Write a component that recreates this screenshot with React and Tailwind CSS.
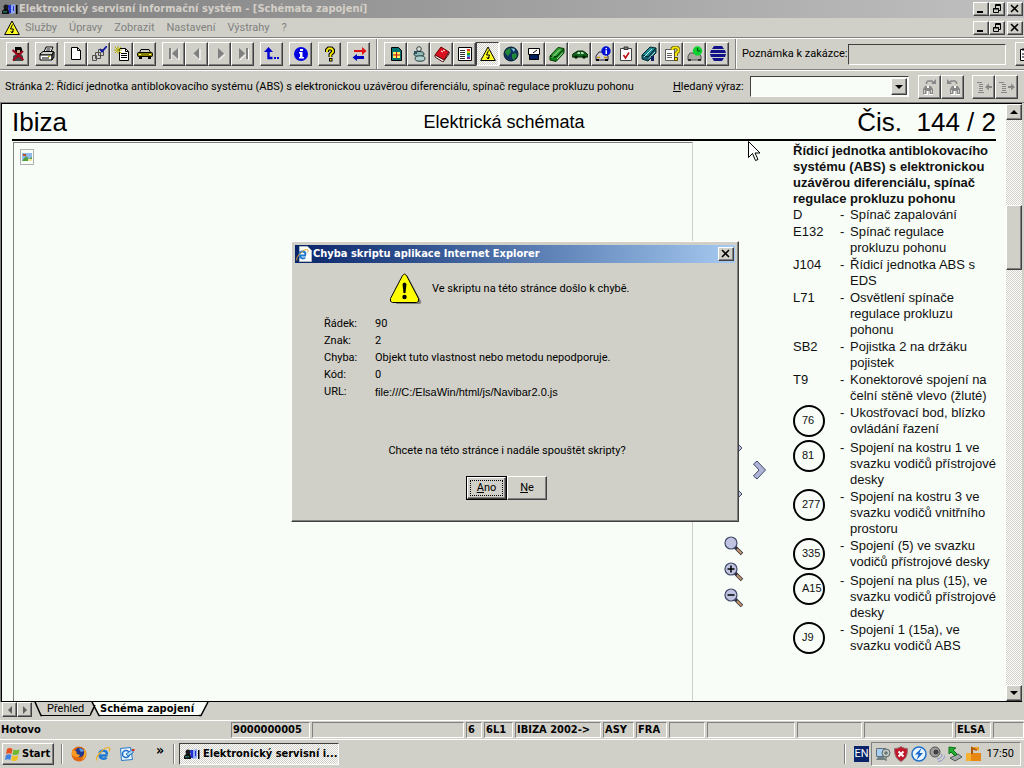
const UI_FONT = 'font-[Roboto,"Liberation_Sans",sans-serif]';
const UI_BOLD = 'font-bold font-["DejaVu_Sans_Condensed","DejaVu_Sans",sans-serif]';
const RAISED = 'bg-[#d0d0c8] border border-t-white border-l-white border-r-[#404040] border-b-[#404040] shadow-[inset_-1px_-1px_0_#808080]';
const SUNKEN = 'border border-t-[#808080] border-l-[#808080] border-r-white border-b-white';
const DITHER = 'bg-[conic-gradient(#ffffff_25%,#d0d0c8_0_50%,#ffffff_0_75%,#d0d0c8_0)] bg-[length:2px_2px]';

const Icon = ({ children, className = 'w-4 h-4', box = '0 0 16 16' }) => (
    <svg viewBox={box} className={`shrink-0 ${className}`} fill="none" aria-hidden="true">
        {children}
    </svg>
);

const icons = {
    exit: (
        <Icon>
            <path d="M5 1h6l1 2v3l-1 2H6L5 6z" fill="#000" />
            <path d="M7 4h3v3H7z" fill="#d0a880" />
            <path d="M3 10l3-2h5l2 2v5H3z" fill="#404848" />
            <path d="M2.500 4l11 10M13 5L3 14.500" stroke="#a00018" strokeWidth="2" />
        </Icon>
    ),
    print: (
        <Icon>
            <path d="M5 6l2-5h7l-2 5" fill="#fff" stroke="#000" />
            <path d="M7.500 3h4M7 5h4" stroke="#000" />
            <path d="M1 8l3-2.500h10.500L13 9H1z" fill="#d0d0c8" stroke="#000" />
            <path d="M1 9h12v5H1z" fill="#fff" stroke="#000" />
            <path d="M13 9l2-3v5l-2 3zM3 12h7" fill="#808080" stroke="#000" />
            <path d="M9 10.500h2" stroke="#c0c000" />
        </Icon>
    ),
    page: (
        <Icon>
            <path d="M3.500 1.500h6l3 3v9h-9z" fill="#fff" stroke="#000" />
            <path d="M9.500 1.500v3h3" stroke="#000" />
        </Icon>
    ),
    pages: (
        <Icon>
            <path d="M7.500 3.500h5v6h-5zM4.500 6.500h5v6h-5zM1.500 9.500h4v5h-4z" fill="#d0d0c8" stroke="#505050" />
            <path d="M9 3l2 2.500L16 0" stroke="#1018a0" strokeWidth="1.800" />
        </Icon>
    ),
    newPage: (
        <Icon>
            <path d="M5.500 2.500h6l3 3v9h-9z" fill="#fff" stroke="#000" />
            <path d="M11.500 2.500v3h3M7 7.500h6M7 9.500h6M7 11.500h6" stroke="#000" />
            <path d="M4 0v8M0 4h8M1 1l6 6M7 1L1 7" stroke="#b8b000" />
        </Icon>
    ),
    car: (
        <Icon>
            <path d="M4 3.500h8l2 4H2z" fill="#d0d0c8" stroke="#000" />
            <rect x=".5" y="6.500" width="15" height="4" rx="1" fill="#888000" stroke="#000" />
            <path d="M2 11h3v2H2zM11 11h3v2h-3z" fill="#000" />
            <path d="M2 8.500h2M12 8.500h2" stroke="#ffff60" />
        </Icon>
    ),
    first: (
        <Icon>
            <path d="M5 3v11M13 3v11l-6-5.500" stroke="#fff" />
            <path d="M3 2h2v11H3zM12 2v11L6 7.500z" fill="#808080" />
        </Icon>
    ),
    prev: (
        <Icon>
            <path d="M11 3v11l-6-5.500" stroke="#fff" />
            <path d="M10 2v11L4.500 7.500z" fill="#808080" />
        </Icon>
    ),
    next: (
        <Icon>
            <path d="M7 14l6-5.500" stroke="#fff" />
            <path d="M6 2v11l6-5.500z" fill="#808080" />
        </Icon>
    ),
    last: (
        <Icon>
            <path d="M5 14l6-5.500M13.500 3v11" stroke="#fff" />
            <path d="M4 2v11l6-5.500zM11 2h2v11h-2z" fill="#808080" />
        </Icon>
    ),
    back: (
        <Icon>
            <path d="M4.500 3v9h4" stroke="#0000d0" strokeWidth="2.400" />
            <path d="M0 6l4.500-5L9 6z" fill="#0000d0" />
            <path d="M10 11h2v2h-2zM13 11h2v2h-2z" fill="#0000d0" />
        </Icon>
    ),
    info: (
        <Icon>
            <circle cx="8" cy="8" r="7" fill="#0000e0" />
            <path d="M7 3h3v2H7zM6 6h3.500v5H11v1.500H6V11h1V7.500H6z" fill="#fff" />
        </Icon>
    ),
    help: (
        <Icon>
            <path d="M5 6V4l1.500-1.500h3L11 4v2L8.500 8.500V11" stroke="#000" strokeWidth="4" />
            <path d="M5 6V4l1.500-1.500h3L11 4v2L8.500 8.500V11" stroke="#f8f000" strokeWidth="1.800" />
            <path d="M7 12h3.500v3.500H7z" fill="#000" />
            <path d="M8 13h1.500v1.500H8z" fill="#f8f000" />
        </Icon>
    ),
    swap: (
        <Icon>
            <path d="M3 4h8V1l4.500 4L11 9V6H3z" fill="#e01010" />
            <path d="M13 10H6V8l-4.500 3.500L6 15v-2h7z" fill="#0000c0" />
        </Icon>
    ),
    sheet: (
        <Icon>
            <path d="M3.500 1.500h7l3 3v10h-10z" fill="#007070" stroke="#000" />
            <path d="M5 6h7v6H5z" fill="#fff060" />
            <path d="M5 9h7M8.500 6v6" stroke="#c01010" />
        </Icon>
    ),
    wheel: (
        <Icon>
            <circle cx="8" cy="3" r="2.300" fill="#e0e0e0" stroke="#304040" />
            <ellipse cx="8" cy="8" rx="5" ry="2.500" fill="#90b8b8" stroke="#203838" />
            <ellipse cx="9" cy="12.500" rx="5" ry="2.700" fill="#b0d0d0" stroke="#203838" />
            <path d="M3 5h3v3H3z" fill="#305060" />
        </Icon>
    ),
    redBook: (
        <Icon>
            <path d="M1 9l6-8 8 5-5 8z" fill="#d81020" stroke="#700" />
            <path d="M1 9v2l8 5 6-8V6l-5 8z" fill="#fff" stroke="#501010" />
            <path d="M7 5l2 1M9 4l2 1" stroke="#fff" />
        </Icon>
    ),
    list: (
        <Icon>
            <path d="M1.500 1.500h13v13h-13z" fill="#fff" stroke="#000" />
            <path d="M3 4.500h5M3 6.500h5M3 8.500h5M3 10.500h5M3 12.500h5" stroke="#303030" />
            <path d="M10 3h3v2h-3z" fill="#e03030" />
            <path d="M10 5h3v2h-3z" fill="#e0d000" />
            <path d="M10 7h3v2h-3z" fill="#20a020" />
            <path d="M10 9h3v2h-3z" fill="#20a0e0" />
            <path d="M10 11h3v2h-3z" fill="#8020a0" />
        </Icon>
    ),
    warning: (
        <Icon>
            <path d="M8 1l7.300 13.500H.7z" fill="#ffff20" stroke="#000" />
            <path d="M8.500 4.500L6.500 9h3L8 13M6.800 11.200L8 13l1.600-1.500" stroke="#000" />
        </Icon>
    ),
    globe: (
        <Icon>
            <circle cx="8" cy="8" r="7" fill="#103060" stroke="#001828" />
            <path d="M3 4l4-2 1 4-3 4-3-3zM9 8l4-1 1 3-3 4-2-2z" fill="#208838" />
            <path d="M8 2l4 1-1 3z" fill="#80c8d8" />
        </Icon>
    ),
    monitor: (
        <Icon>
            <path d="M2.500 2.500h11v6h-11z" fill="#fff" stroke="#000" />
            <path d="M7 7l4-3" stroke="#000" />
            <path d="M3.500 8.500h9v5h-9z" fill="#002060" stroke="#000" />
        </Icon>
    ),
    greenBook: (
        <Icon>
            <path d="M1 10l8-8.500 6 1L7 11z" fill="#30a030" stroke="#003800" />
            <path d="M1 10v4l6 1.500L15 7V3L7 11z" fill="#108018" stroke="#003800" />
            <path d="M3 11.500L11 3.500M8 13l6-6.500" stroke="#b0e8b0" />
        </Icon>
    ),
    greenCar: (
        <Icon>
            <path d="M0 10l1-2 3-2 2-1h5l3 2 2 2v2H0z" fill="#106820" stroke="#002800" />
            <path d="M5 8l1-2h2v2zM9 8V6h2l1 2z" fill="#b8d8b8" />
            <circle cx="4" cy="11" r="1.800" fill="#002000" />
            <circle cx="12" cy="11" r="1.800" fill="#002000" />
        </Icon>
    ),
    carInfo: (
        <Icon>
            <path d="M1 10l3-4h6l3 4v4H1z" fill="#d0d0d0" stroke="#202040" />
            <path d="M2 11.500h3M9 11.500h3" stroke="#d09000" strokeWidth="1.500" />
            <path d="M1 13h3v2H1zM10 13h3v2h-3z" fill="#000" />
            <circle cx="11" cy="5" r="4.700" fill="#0010d8" />
            <path d="M10.500 2h1.500v1.300h-1.500zM10.500 4.300H12V8h-1.500z" fill="#fff" />
        </Icon>
    ),
    checklist: (
        <Icon>
            <path d="M2.500 2.500h11v12h-11z" fill="#fff" stroke="#404040" />
            <path d="M6 1h4v2.500H6z" fill="#808080" stroke="#303030" />
            <path d="M5.500 9l2 3L11 6.500" stroke="#c01010" strokeWidth="1.600" />
        </Icon>
    ),
    tealBook: (
        <Icon>
            <path d="M1 9l8-8 6 1-8 9z" fill="#208890" stroke="#002830" />
            <path d="M1 9v4l6 2 8-8V2l-8 9z" fill="#186070" stroke="#002830" />
            <path d="M3 11l8-8M8 12.500L14 6" stroke="#b8e8f0" />
            <path d="M10 10h3v5h-3z" fill="#102060" />
        </Icon>
    ),
    docHelp: (
        <Icon>
            <path d="M1.500 3.500h9v11h-9z" fill="#fff" stroke="#606060" />
            <path d="M3 7.500h5M3 9.500h5M3 11.500h5" stroke="#606060" />
            <path d="M8.500 4V2.500L10 1.500h3L14.500 3v2L12 7.500V10" stroke="#504800" strokeWidth="3.400" />
            <path d="M8.500 4V2.500L10 1.500h3L14.500 3v2L12 7.500V10" stroke="#f8e800" strokeWidth="2" />
            <path d="M10.500 11.500h3v3h-3z" fill="#f8e800" stroke="#504800" />
        </Icon>
    ),
    carClock: (
        <Icon>
            <path d="M1 10l2-3h8l3 3v4H1z" fill="#a8a8a0" stroke="#505050" />
            <path d="M1 13h3v2H1zM11 13h3v2h-3z" fill="#303030" />
            <circle cx="10.500" cy="5" r="4.700" fill="#10d030" />
            <path d="M10.500 2v3h3" stroke="#005010" />
        </Icon>
    ),
    stripes: (
        <Icon>
            <path d="M4 0h8l2 3H2zM1 4h14l1 3H0zM0 8h16l-1 3H1zM2 12h12l-2 3H4z" fill="#101088" />
        </Icon>
    ),
    note: (
        <Icon>
            <path d="M1.500 3.500h12v11h-12zM4 2v3M10 2v3" fill="#fff" stroke="#000" />
            <path d="M3 8h2M7 8h2M3 11h2M7 11h2" stroke="#000" />
        </Icon>
    ),
    find: (
        <Icon>
            <path d="M2 16h4v-4h1v4h4v-5l-2-4H4l-2 4z" fill="#fff" />
            <path d="M1 15v-5l2-3h2v2h2V7h2l2 3v5H7.500v-3h-3v3z" fill="#888" />
            <path d="M2.500 11v3M9.500 11v3" stroke="#d0d0c8" />
            <path d="M4.500 5V3.500L6 2h4l1.500 2" stroke="#888" strokeWidth="1.500" />
            <path d="M9 5h5V0z" fill="#888" />
        </Icon>
    ),
    findBack: (
        <Icon>
            <path d="M6 16h4v-4h1v4h4v-5l-2-4H8l-2 4z" fill="#fff" />
            <path d="M5 15v-5l2-3h2v2h2V7h2l2 3v5h-3.500v-3h-3v3z" fill="#888" />
            <path d="M6.500 11v3M13.500 11v3" stroke="#d0d0c8" />
            <path d="M11.500 5V3.500L10 2H6L4.500 4" stroke="#888" strokeWidth="1.500" />
            <path d="M7 5H2V0z" fill="#888" />
        </Icon>
    ),
    outdent: (
        <Icon>
            <path d="M1 3.500h5M3 5.500h4M3 7.500h4M3 9.500h4M3 11.500h4M2 13.500h6" stroke="#888" />
            <path d="M9 8l4-3.500V7h3v2h-3v2.500z" fill="#888" />
        </Icon>
    ),
    indent: (
        <Icon>
            <path d="M0 3.500h5M3 5.500h4M3 7.500h4M3 9.500h4M3 11.500h4M2 13.500h6" stroke="#888" />
            <path d="M16 8l-4-3.500V7H9v2h3v2.500z" fill="#888" />
        </Icon>
    ),
    app: (
        <Icon>
            <circle cx="4" cy="6" r="2.500" fill="#181818" />
            <path d="M0 10l2-2h4l1 2v3H0z" fill="#101010" />
            <path d="M1 10h4v1.500H1z" fill="#207060" />
            <path d="M6 4h4v8H7z" fill="#2030d0" />
            <path d="M9 4l4-1v9l-4 1z" fill="#90a8f0" />
            <path d="M11 5h1v5h-1z" fill="#2030d0" />
            <path d="M14 4h1.500v9H14z" fill="#000" />
        </Icon>
    ),
    ie: (
        <Icon>
            <path d="M12.500 9.500H4.500C5 13 10 13.500 11.500 11.500M4.500 7.500C5 3.500 12 3.500 12 8.300" stroke="#2078d0" strokeWidth="2.400" />
            <path d="M2 14.500C-1 12 8 2 13 1.500c3 0 1.500 3 1 4" stroke="#f0b020" strokeWidth="1.200" />
        </Icon>
    ),
    iePage: (
        <Icon>
            <path d="M3.500.5h8l4 4v11h-12z" fill="#fff" stroke="#b0b8c0" />
            <path d="M10 9.500H3.500c.5 3.500 4.500 3.500 5.500 2M3.500 8C4 4.500 9.500 4.500 9.500 8.500" stroke="#2078d0" strokeWidth="2" />
            <path d="M1 14.500C-1 12 6 4 10.500 3.500c2.500 0 1.500 2 1 3" stroke="#e0a020" />
        </Icon>
    ),
    firefox: (
        <Icon>
            <circle cx="8" cy="8" r="7.500" fill="#e06810" />
            <circle cx="8.500" cy="6.500" r="4.700" fill="#203890" />
            <path d="M8 3c2-1 4 0 5 2l-3 1z" fill="#60a0e0" />
            <path d="M1 3c1 2 2 1 4 2 1 1 0 2 1 3l3 1c-1 3-5 3-8 0z" fill="#f89820" />
            <path d="M13 3c3 3 2 9-2 11 2-3 3-7 2-11z" fill="#f8c030" />
        </Icon>
    ),
    outlook: (
        <Icon>
            <path d="M1.500 2.500l10-1 2 12-11 1z" fill="#e8f4ff" stroke="#2878c8" />
            <circle cx="7" cy="8" r="3.500" stroke="#2070c8" strokeWidth="1.600" />
            <path d="M7 8l7-5v4l-5 3z" fill="#a8d0f0" stroke="#2878c8" />
            <path d="M13 3h2.500v2H13z" fill="#d03020" />
        </Icon>
    ),
    windows: (
        <Icon>
            <path d="M2 3c2-1.500 4-1 5.500 0L6.500 8C5 7 3 6.800 1 8z" fill="#e85020" />
            <path d="M8.500 3.400c2 1 4 1 6-.2l-1 5c-2 1-4 1-6 .2z" fill="#70b830" />
            <path d="M1 9c2-1.200 4-1 5.300 0l-1 5C4 13 2 12.800 0 14z" fill="#4080e0" />
            <path d="M7.300 9.400c2 1 4 1 6-.2l-1 5c-2 1-4 1-6 .2z" fill="#f0c020" />
        </Icon>
    ),
};

const TRAY = [
    ['Síť', (
        <Icon>
            <path d="M1.500 2.500h9v8h-9z" fill="#a8d0f0" stroke="#607080" />
            <path d="M3 11h6l2 3H1z" fill="#708080" />
            <circle cx="11" cy="7" r="4" fill="#c0c8c8" stroke="#606868" />
            <path d="M9 7h4M11 5v4M11 11v4" stroke="#506060" />
        </Icon>
    )],
    ['Zabezpečení', (
        <Icon>
            <path d="M8 .5c2 1.500 4 2 6.500 2 0 6-1 10-6.500 13-5.500-3-6.500-7-6.500-13 2.500 0 4.500-.5 6.500-2z" fill="#c01828" stroke="#907078" />
            <path d="M5.500 5.500l5 5M10.500 5.500l-5 5" stroke="#fff" strokeWidth="2" />
        </Icon>
    )],
    ['Napájení', (
        <Icon>
            <circle cx="8" cy="8" r="7" fill="#e8f4ff" stroke="#2070c8" strokeWidth="1.500" />
            <path d="M10.500 2L4 8.500h3.500L5.500 14 12 7H8.500z" fill="#1868d0" />
        </Icon>
    )],
    ['Hlasitost', (
        <Icon>
            <circle cx="6" cy="6" r="5" fill="#a0a0a0" stroke="#505050" />
            <circle cx="7" cy="6" r="2.500" fill="#404040" />
            <path d="M8 13c3 0 5-2 5-5M9 15.500c4 0 6.500-3 6.500-6" stroke="#8890d0" />
        </Icon>
    )],
    ['Hardware', (
        <Icon>
            <path d="M3 12l8-4 4 3-7 4z" fill="#a0a8a8" stroke="#505858" />
            <path d="M2 1v7l2-2 4 4 2-2-4-4 3-2z" fill="#20b030" stroke="#107018" />
        </Icon>
    )],
    ['Balíček', (
        <Icon>
            <path d="M1 7h15v8H1z" fill="#e88810" />
            <path d="M1 7h5v8H1z" fill="#f8b030" />
            <path d="M7 8V2l5 2" stroke="#b05800" strokeWidth="2" />
            <path d="M8 1h6v4z" fill="#f0a020" />
        </Icon>
    )],
];

const FILE_TOOLS = [
    [['exit', 'Konec']],
    [['print', 'Tisk']],
    [['page', 'Nový'], ['pages', 'Seznam'], ['newPage', 'Nová zakázka'], ['car', 'Vozidlo']],
    [['first', 'První'], ['prev', 'Předchozí'], ['next', 'Další'], ['last', 'Poslední']],
    [['back', 'Zpět']],
    [['info', 'Informace']],
    [['help', 'Nápověda']],
    [['swap', 'Přepnout']],
];

const MODULE_TOOLS = [
    ['sheet', 'Karta'], ['wheel', 'Servis'], ['redBook', 'Příručka'], ['list', 'Seznam prací'],
    ['warning', 'Schémata zapojení'], ['globe', 'Svět'], ['monitor', 'Diagnostika'], ['greenBook', 'Údržba'],
    ['greenCar', 'Karoserie'], ['carInfo', 'Údaje o vozidle'], ['checklist', 'Kontrola'], ['tealBook', 'Opravy'],
    ['docHelp', 'Dokumentace'], ['carClock', 'Časy'], ['stripes', 'Ostatní'],
];

const MENU = ['Služby', 'Úpravy', 'Zobrazit', 'Nastavení', 'Výstrahy', '?'];

const LEGEND = [
    { code: 'D', text: 'Spínač zapalování' },
    { code: 'E132', text: 'Spínač regulace\nprokluzu pohonu' },
    { code: 'J104', text: 'Řídicí jednotka ABS s\nEDS' },
    { code: 'L71', text: 'Osvětlení spínače\nregulace prokluzu\npohonu' },
    { code: 'SB2', text: 'Pojistka 2 na držáku\npojistek' },
    { code: 'T9', text: 'Konektorové spojení na\nčelní stěně vlevo (žluté)' },
    { code: '76', round: true, text: 'Ukostřovací bod, blízko\novládání řazení' },
    { code: '81', round: true, text: 'Spojení na kostru 1 ve\nsvazku vodičů přístrojové\ndesky' },
    { code: '277', round: true, text: 'Spojení na kostru 3 ve\nsvazku vodičů vnitřního\nprostoru' },
    { code: '335', round: true, text: 'Spojení (5) ve svazku\nvodičů přístrojové desky' },
    { code: 'A15', round: true, text: 'Spojení na plus (15), ve\nsvazku vodičů přístrojové\ndesky' },
    { code: 'J9', round: true, text: 'Spojení 1 (15a), ve\nsvazku vodičů ABS' },
];

const ERROR_ROWS = [
    ['Řádek:', '90'],
    ['Znak:', '2'],
    ['Chyba:', 'Objekt tuto vlastnost nebo metodu nepodporuje.'],
    ['Kód:', '0'],
];

const ToolButton = ({ icon, label, active = false }) => (
    <button
        type="button"
        aria-label={label}
        className={`w-[23px] h-6 shrink-0 flex items-center justify-center ${active ? `${DITHER} border border-t-[#404040] border-l-[#404040] border-r-white border-b-white` : RAISED}`}
    >
        {icons[icon]}
    </button>
);

const Separator = ({ className = 'h-8' }) => (
    <div className={`w-[2px] shrink-0 border-l border-l-[#808080] border-r border-r-white ${className}`} />
);

const CloseGlyph = () => (
    <Icon className="w-[10px] h-[10px]" box="0 0 10 10"><path d="M1 1l7 7M8 1L1 8" stroke="#000" strokeWidth="1.600" /></Icon>
);

const WindowButtons = () => (
    <div className="flex">
        <button type="button" aria-label="Minimalizovat" className={`w-4 h-[14px] flex items-center justify-center ${RAISED}`}>
            <Icon className="w-[10px] h-[10px]" box="0 0 10 10"><path d="M1 7h6v2H1z" fill="#000" /></Icon>
        </button>
        <button type="button" aria-label="Obnovit" className={`w-4 h-[14px] flex items-center justify-center ${RAISED}`}>
            <Icon className="w-[10px] h-[10px]" box="0 0 10 10">
                <path d="M3.500 4V.5h5V6.500H7M3 1.500h6M1.500 4.500h5v4h-5zM1 5h6" stroke="#000" />
            </Icon>
        </button>
        <button type="button" aria-label="Zavřít" className={`w-4 h-[14px] ml-[2px] flex items-center justify-center ${RAISED}`}>
            <CloseGlyph />
        </button>
    </div>
);

const Arrow = ({ dir, color = '#000' }) => {
    const paths = { up: 'M0 6h8L4 2z', down: 'M0 2h8L4 6z', left: 'M6 0v8L2 4z', right: 'M2 0v8l4-4z' };
    return (
        <Icon className="w-2 h-2" box="0 0 8 8"><path d={paths[dir]} fill={color} /></Icon>
    );
};

const Magnifier = ({ sign, label }) => (
    <button type="button" aria-label={label} className="block w-5 h-5">
        <Icon className="w-5 h-5" box="0 0 20 20">
            <path d="M11 11l7 7" stroke="#303040" strokeWidth="3.600" />
            <path d="M13 13l4.500 4.500" stroke="#c89868" strokeWidth="1.800" />
            <circle cx="7" cy="7" r="6" fill="#c0c4e0" stroke="#404868" strokeWidth="1.200" />
            {sign !== 'none' && <path d="M3.500 7h7" stroke="#000" strokeWidth="1.500" />}
            {sign === 'plus' && <path d="M7 3.500v7" stroke="#000" strokeWidth="1.500" />}
        </Icon>
    </button>
);

const Toolbar = () => (
    <div className="h-8 flex items-center border-t border-t-white border-b border-b-[#808080] overflow-hidden">
        <div className="flex gap-[6px] pl-[6px] pr-[6px]">
            {FILE_TOOLS.map((group, i) => (
                <div key={i} className="flex">
                    {group.map(([icon, label]) => <ToolButton key={icon} icon={icon} label={label} />)}
                </div>
            ))}
        </div>
        <Separator />
        <div className="flex px-[6px]">
            {MODULE_TOOLS.map(([icon, label]) => (
                <ToolButton key={icon} icon={icon} label={label} active={icon === 'warning'} />
            ))}
        </div>
        <Separator />
        <label htmlFor="note" className="shrink-0 w-[111px] pl-[5px] whitespace-nowrap">Poznámka k zakázce:</label>
        <input id="note" type="text" className="h-[21px] min-w-0 grow bg-transparent border border-t-[#404040] border-l-[#404040] border-r-white border-b-white px-1 outline-none" />
        <div className="w-[18px] pl-[9px] shrink-0 overflow-hidden flex">
            <ToolButton icon="note" label="Poznámka" />
        </div>
    </div>
);

const SearchBar = () => (
    <div className="h-8 flex items-center border-t border-t-white pl-[5px] pr-[6px]">
        <p className="grow whitespace-nowrap">
            Stránka 2: Řídicí jednotka antiblokovacího systému (ABS) s elektronickou uzávěrou diferenciálu, spínač regulace prokluzu pohonu
        </p>
        <label htmlFor="search" className="w-[77px] shrink-0 whitespace-nowrap"><u>H</u>ledaný výraz:</label>
        <div className="relative w-[159px] shrink-0">
            <select id="search" className="block w-full h-[21px] appearance-none bg-[#f8fdf8] border border-t-[#404040] border-l-[#404040] border-r-white border-b-white">
                <option value="" />
            </select>
            <span className={`absolute right-[2px] top-[2px] w-4 h-[17px] flex items-center justify-center pointer-events-none ${RAISED}`}>
                <Arrow dir="down" />
            </span>
        </div>
        <div className="flex pl-[9px]">
            <ToolButton icon="find" label="Najít další" />
            <ToolButton icon="findBack" label="Najít předchozí" />
        </div>
        <div className="flex pl-2">
            <ToolButton icon="outdent" label="Předchozí výskyt" />
            <ToolButton icon="indent" label="Další výskyt" />
        </div>
    </div>
);

const Legend = () => (
    <aside className="w-[203px] shrink-0 pt-[2px] text-[13px] leading-4 text-[#101010]">
        <h2 className="font-bold whitespace-pre-line">
            {'Řídicí jednotka antiblokovacího\nsystému (ABS) s elektronickou\nuzávěrou diferenciálu, spínač\nregulace prokluzu pohonu'}
        </h2>
        <table className="w-full border-collapse">
            <tbody>
                {LEGEND.map((row) => (
                    <tr key={row.code} className="align-top">
                        <td className="w-[47px] p-0">
                            {row.round ? (
                                <div className="pb-[3px]">
                                    <div className="w-8 h-8 rounded-full border-2 border-black pl-[7px] pt-[5px] text-[11px] whitespace-nowrap">
                                        {row.code}
                                    </div>
                                </div>
                            ) : row.code}
                        </td>
                        <td className="w-[10px] p-0">-</td>
                        <td className="p-0 pb-px whitespace-pre">{row.text}</td>
                    </tr>
                ))}
            </tbody>
        </table>
    </aside>
);

const Scrollbar = () => (
    <div className={`w-4 shrink-0 flex flex-col ${DITHER}`}>
        <button type="button" aria-label="Nahoru" className={`h-4 flex items-center justify-center ${RAISED}`}><Arrow dir="up" /></button>
        <div className="grow-[85] basis-0" />
        <div className={`grow-[64] basis-0 ${RAISED}`} />
        <div className="grow-[416] basis-0" />
        <button type="button" aria-label="Dolů" className={`h-4 flex items-center justify-center ${RAISED}`}><Arrow dir="down" /></button>
    </div>
);

const Document = () => (
    <main className='grow flex border-t border-t-[#808080] border-l border-l-[#808080] font-["Liberation_Sans",sans-serif]'>
        <div className="grow flex border-t border-l border-b border-black bg-[#f8fdf8]">
            <div className="grow flex flex-col pl-[10px] pr-[10px]">
                <header className="h-[37px] grid grid-cols-3 items-center border-b-2 border-b-black whitespace-nowrap">
                    <h1 className="text-[26px] leading-8">Ibiza</h1>
                    <p className="text-[18px] leading-8 text-center">Elektrická schémata</p>
                    <p className="text-[26px] leading-8 text-right whitespace-pre">Čis.  144 / 2</p>
                </header>
                <div className="grow flex">
                    <div className="grow mt-px ml-px border-t border-l border-r border-t-[#808080] border-l-[#808080] border-r-[#d0d0c8] pl-[6px] pt-[6px]">
                        <div role="img" aria-label="Schéma" className="w-[14px] h-4 border border-[#b0b0b0] flex items-center justify-center">
                            <Icon className="w-[10px] h-2" box="0 0 10 8">
                                <path d="M0 0h10v8H0z" fill="#90b8e8" />
                                <path d="M0 8l4-5 3 3 3-2v4z" fill="#50a040" />
                                <path d="M1 1h3v2H1z" fill="#c05030" />
                                <path d="M6 6h4v2H6z" fill="#f0e8a0" />
                            </Icon>
                        </div>
                    </div>
                    <div className="w-[100px] shrink-0 pl-[31px]">
                        <div className="h-[395px] flex items-end">
                            <div className="h-[94px] flex">
                                <Icon className="w-5 h-14" box="0 0 20 56">
                                    <path d="M14 2l4 4-4 4M14 48l4 4-4 4" fill="#c0c4e0" stroke="#404868" />
                                </Icon>
                                <button type="button" aria-label="Další stránka" className="w-4 h-5 ml-2 mt-[18px]">
                                    <Icon className="w-4 h-5" box="0 0 16 20">
                                        <path d="M1.500 4L5 1l8.500 9L5 19l-3.500-3L7 10z" fill="#b0b4d8" stroke="#404868" />
                                    </Icon>
                                </button>
                            </div>
                        </div>
                        <div className="flex flex-col gap-[6px]">
                            <Magnifier sign="none" label="Lupa" />
                            <Magnifier sign="plus" label="Zvětšit" />
                            <Magnifier sign="minus" label="Zmenšit" />
                        </div>
                    </div>
                    <Legend />
                </div>
            </div>
            <Scrollbar />
        </div>
        <div className="w-[2px] bg-[#d0d0c8]" />
    </main>
);

const SheetTabs = () => (
    <nav className="h-[18px] flex pl-[2px] items-start">
        <button type="button" aria-label="Předchozí list" className={`w-[15px] h-[15px] flex items-center justify-center ${RAISED}`}><Arrow dir="left" color="#606060" /></button>
        <button type="button" aria-label="Další list" className={`w-[15px] h-[15px] mr-[2px] flex items-center justify-center ${RAISED}`}><Arrow dir="right" color="#606060" /></button>
        <Icon className="w-2 h-[15px]" box="0 0 8 15"><path d="M1 0l6 13.500h1" stroke="#000" strokeWidth="1.500" /></Icon>
        <button type="button" className="w-[48px] h-[14px] pl-[5px] text-left leading-[14px] border-b border-b-black">Přehled</button>
        <Icon className="w-[10px] h-[15px]" box="0 0 10 15">
            <path d="M3 0h7v13.500H9z" fill="#f8fdf8" />
            <path d="M0 13.500L5 3M2 0l7 13.500h1" stroke="#000" strokeWidth="1.500" />
        </Icon>
        <button type="button" className={`w-[99px] h-[14px] leading-[14px] text-left bg-[#f8fdf8] border-b border-b-black whitespace-nowrap ${UI_BOLD}`}>Schéma zapojení</button>
        <Icon className="w-[10px] h-[15px]" box="0 0 10 15">
            <path d="M0 0h9L2 13.500H0z" fill="#f8fdf8" />
            <path d="M9 0L2 13.500H0" stroke="#000" strokeWidth="1.500" />
        </Icon>
    </nav>
);

const Cell = ({ className, children }) => (
    <div className={`h-4 px-px leading-[14px] whitespace-nowrap overflow-hidden ${SUNKEN} ${className}`}>{children}</div>
);

const StatusBar = () => (
    <footer className={`h-5 flex items-center gap-[2px] border-t border-t-white border-b border-b-white ${UI_BOLD}`}>
        <p className="w-[229px] shrink-0 pl-px">Hotovo</p>
        <Cell className="w-[79px]">9000000005</Cell>
        <Cell className="grow" />
        <Cell className="w-4">6</Cell>
        <Cell className="w-[29px]">6L1</Cell>
        <Cell className="w-[86px]">IBIZA 2002-&gt;</Cell>
        <Cell className="w-[31px]">ASY</Cell>
        <Cell className="w-[31px]">FRA</Cell>
        <Cell className="w-9" />
        <Cell className="w-[88px]" />
        <Cell className="w-[65px]" />
        <Cell className="w-[89px]" />
        <Cell className="w-9">ELSA</Cell>
        <Cell className="w-[31px]" />
    </footer>
);

const Taskbar = () => (
    <div className="h-7 flex items-center pl-[2px] pr-[3px]">
        <button type="button" className={`w-[52px] h-[22px] flex items-center gap-px pl-[2px] ${UI_BOLD} ${RAISED}`}>
            {icons.windows}
            Start
        </button>
        <Separator className="h-5 ml-[7px]" />
        <div className="flex gap-2 pl-2 w-[86px]">
            <button type="button" aria-label="Firefox">{icons.firefox}</button>
            <button type="button" aria-label="Internet Explorer">{icons.ie}</button>
            <button type="button" aria-label="Outlook Express">{icons.outlook}</button>
        </div>
        <span className={`w-[24px] h-5 pl-[7px] text-sm leading-3 ${UI_BOLD}`}>»</span>
        <Separator className="h-5" />
        <button type="button" className={`w-[160px] h-[22px] ml-[4px] pl-1 flex items-center gap-[3px] whitespace-nowrap overflow-hidden border border-t-[#404040] border-l-[#404040] border-r-white border-b-white ${UI_BOLD} ${DITHER}`}>
            {icons.app}
            Elektronický servisní i...
        </button>
        <div className="grow" />
        <Separator className="h-5" />
        <span className="h-4 ml-2 mr-[2px] bg-[#0a246a] text-white leading-4">EN</span>
        <div className={`h-6 flex items-center gap-[2px] pl-[3px] pr-[6px] ${SUNKEN}`}>
            {TRAY.map(([label, icon]) => (
                <button key={label} type="button" aria-label={label}>{icon}</button>
            ))}
            <time className="pl-1 whitespace-nowrap">17:50</time>
        </div>
    </div>
);

const ErrorDialog = () => (
    <div
        role="dialog"
        aria-labelledby="error-title"
        className={`absolute left-[291px] top-[241px] w-[448px] h-[281px] p-[3px] ${RAISED}`}
    >
        <div className="h-[18px] flex items-center bg-linear-to-r from-[#0a246a] to-[#a6caf0] px-px">
            {icons.iePage}
            <h2 id="error-title" className={`grow pl-px text-white ${UI_BOLD}`}>Chyba skriptu aplikace Internet Explorer</h2>
            <button type="button" aria-label="Zavřít" className={`w-4 h-[14px] flex items-center justify-center ${RAISED}`}>
                <CloseGlyph />
            </button>
        </div>
        <div className="flex items-center h-[52px] pl-[95px] gap-[10px]">
            <Icon className="w-8 h-8" box="0 0 32 32">
                <path d="M17 2l14 26q1 3-2 3H6z" fill="#808080" />
                <path d="M12.500 2.500q2-3 4 0l12 23q1 3.500-2 4h-24q-3-.5-2-4z" fill="#ffff00" stroke="#000" />
                <path d="M12.500 11q2-3 4 0l-1 9h-2z" fill="#000" />
                <circle cx="14.500" cy="24" r="2.200" fill="#000" />
            </Icon>
            <p>Ve skriptu na této stránce došlo k chybě.</p>
        </div>
        <dl className="grid grid-cols-[51px_1fr] pl-[29px] leading-[17px]">
            {ERROR_ROWS.map(([name, value]) => (
                <div key={name} className="contents">
                    <dt>{name}</dt>
                    <dd>{value}</dd>
                </div>
            ))}
            <dt>URL:</dt>
            <dd className='pt-px font-["Liberation_Sans",sans-serif]'>file:///C:/ElsaWin/html/js/Navibar2.0.js</dd>
        </dl>
        <p className="pt-[42px] pr-4 text-center leading-4">Chcete na této stránce i nadále spouštět skripty?</p>
        <div className="flex pt-[17px] pl-[171px]">
            <button type="button" className="w-[41px] h-6 p-px bg-black">
                <span className={`flex w-full h-full p-[2px] ${RAISED}`}>
                    <span className="grow flex items-center justify-center border border-dotted border-black"><span className="underline">A</span>no</span>
                </span>
            </button>
            <button type="button" className={`w-10 h-6 ${RAISED}`}><u>N</u>e</button>
        </div>
    </div>
);

export default function App() {
    return (
        <div className={`relative min-h-screen flex flex-col bg-[#d0d0c8] text-black text-[11px] leading-[14px] ${UI_FONT}`}>
            <div className={`h-[18px] flex items-center bg-linear-to-r from-[#808080] to-[#c0c0c0] pl-[2px] pr-px text-[#d4d0c8] ${UI_BOLD}`}>
                {icons.app}
                <h1 className="grow pl-px">Elektronický servisní informační systém - [Schémata zapojení]</h1>
                <WindowButtons />
            </div>
            <div className="h-5 flex items-center pl-1 pr-px border-b border-b-[#808080] text-[#808080]">
                {icons.warning}
                <nav className="grow flex gap-3 pl-[5px]">
                    {MENU.map((item) => <button key={item} type="button">{item}</button>)}
                </nav>
                <WindowButtons />
            </div>
            <Toolbar />
            <SearchBar />
            <Document />
            <SheetTabs />
            <StatusBar />
            <Taskbar />
            <ErrorDialog />
            <svg viewBox="0 0 12 20" className="absolute left-[748px] top-[141px] w-3 h-5" aria-hidden="true">
                <path d="M.5.5v16l4-4 3 7 2.500-1-3-6.500h5z" fill="#fff" stroke="#000" />
            </svg>
        </div>
    );
}
